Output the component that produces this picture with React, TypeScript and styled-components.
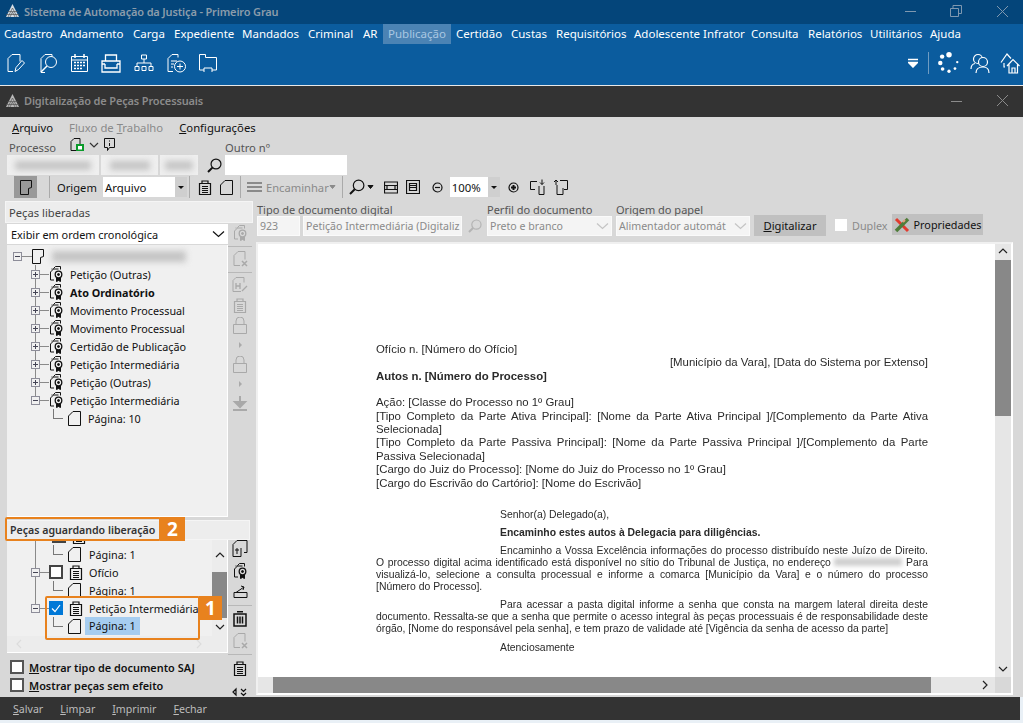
import React from "react";
import styled, { createGlobalStyle } from "styled-components";

const Global = createGlobalStyle`
  html, body { margin: 0; padding: 0; background: #fff; }
  body { font-family: "Noto Sans", "Open Sans", sans-serif; font-size: 12px; color: #111; }
  * { box-sizing: border-box; }
`;

const Page = styled.div`
  position: relative;
  width: 1023px;
  height: 723px;
  display: flex;
  flex-direction: column;
  overflow: hidden;
  background: #e9f0f6;
`;

const MainHead = styled.div`
  background: #0b5c9e;
  height: 85px;
  display: flex;
  flex-direction: column;
`;

const TitleBar = styled.div<{ $dark?: boolean }>`
  height: ${(p) => (p.$dark ? "31px" : "24px")};
  flex: none;
  display: flex;
  align-items: center;
  padding: 0 0 2px 6px;
  background: ${(p) => (p.$dark ? "#333333" : "#04457a")};
  color: ${(p) => (p.$dark ? "#8b8b8b" : "#8b9cab")};
  font-weight: 600;
  font-size: 11px;
  letter-spacing: -0.15px;
`;

const TitleText = styled.span`
  margin-left: 5px;
  flex: 1;
  white-space: nowrap;
`;

const WinButton = styled.span`
  width: 46px;
  display: flex;
  justify-content: center;
  align-items: center;
  padding-left: 4px;
`;

const MenuBar = styled.nav`
  height: 20px;
  display: flex;
  align-items: stretch;
  padding-left: 4px;
`;

const MenuItem = styled.span<{ $w: number; $active?: boolean }>`
  width: ${(p) => p.$w}px;
  flex: none;
  display: flex;
  align-items: center;
  white-space: nowrap;
  font-size: 11.5px;
  padding-bottom: 2px;
  color: #fff;
  ${(p) => p.$active && "background:#4b83b4;color:#a9c7e2;margin:0 5px 0 -5px;padding-left:5px;"}
`;

const IconBar = styled.div`
  flex: 1;
  display: flex;
  align-items: center;
  padding: 0 3px 3px 7px;
  gap: 13px;
`;

const Spacer = styled.div`
  flex: 1;
`;

const StatusIcons = styled.div`
  display: flex;
  align-items: center;
  gap: 10px;
`;

const IconDivider = styled.span`
  width: 1px;
  height: 22px;
  margin-right: -1px;
  background: #6f9cc2;
`;

const Hairline = styled.div`
  height: 1px;
  background: #e8e8e8;
  flex: none;
`;

const Body = styled.div`
  flex: 1;
  min-height: 0;
  background: #d8d8d8;
  display: flex;
  flex-direction: column;
`;

const FileMenu = styled.div`
  height: 21px;
  display: flex;
  align-items: center;
  padding-left: 12px;
  gap: 16px;
  flex: none;
`;

const FileItem = styled.span<{ $off?: boolean }>`
  color: ${(p) => (p.$off ? "#8a8a8a" : "#111")};
  font-size: 11.3px;
`;

const Under = styled.span`
  text-decoration: underline;
`;

const ProcessBlock = styled.div`
  height: 37px;
  flex: none;
  display: flex;
  padding: 1px 0 0 7px;
`;

const ProcessColumn = styled.div`
  width: 218px;
  display: flex;
  flex-direction: column;
`;

const LabelLine = styled.div<{ $flush?: boolean }>`
  height: 17px;
  display: flex;
  align-items: center;
  color: #555;
  font-size: 11.2px;
  padding-left: ${(p) => (p.$flush ? 0 : 2)}px;
`;

const ProcessIcons = styled.span`
  margin-left: 14px;
  display: flex;
  align-items: center;
  gap: 4px;
  margin-top: -5px;
`;

const InputRow = styled.div`
  display: flex;
  align-items: center;
  gap: 2px;
  height: 21px;
`;

const BlurField = styled.div<{ $w: number }>`
  width: ${(p) => p.$w}px;
  height: 20px;
  background: #efefef;
  display: flex;
  align-items: center;
  justify-content: center;
`;

const BlurInk = styled.span<{ $w: number; $h?: number }>`
  display: inline-block;
  width: ${(p) => p.$w}px;
  height: ${(p) => p.$h ?? 9}px;
  background: #c4c4c4;
  filter: blur(3px);
`;

const WhiteField = styled.div<{ $w: number }>`
  width: ${(p) => p.$w}px;
  height: 20px;
  background: #fff;
`;

const Toolbar = styled.div`
  height: 24px;
  flex: none;
  display: flex;
  align-items: center;
  padding-left: 14px;
`;

const ToggleButton = styled.span`
  width: 23px;
  height: 22px;
  background: #999;
  display: flex;
  align-items: center;
  justify-content: center;
`;

const ToolSep = styled.span<{ $l: number; $r: number }>`
  width: 1px;
  height: 22px;
  background: #aaa;
  margin: 0 ${(p) => p.$r}px 0 ${(p) => p.$l}px;
  flex: none;
`;

const ToolText = styled.span<{ $off?: boolean }>`
  font-size: 11.2px;
  white-space: nowrap;
  color: ${(p) => (p.$off ? "#8a8a8a" : "#111")};
`;

const ToolCombo = styled.span<{ $w: number; $l: number }>`
  width: ${(p) => p.$w}px;
  height: 20px;
  margin-left: ${(p) => p.$l}px;
  background: #fff;
  display: flex;
  align-items: center;
  padding-left: 2px;
  font-size: 11.4px;
  flex: none;
`;

const ComboValue = styled.span`
  flex: 1;
`;

const ComboArrow = styled.span`
  width: 12px;
  height: 100%;
  background: #cfcfcf;
  display: flex;
  align-items: center;
  justify-content: center;
  &::after {
    content: "";
    border-left: 3px solid transparent;
    border-right: 3px solid transparent;
    border-top: 3px solid #111;
  }
`;

const Gap = styled.span<{ $w: number }>`
  width: ${(p) => p.$w}px;
  flex: none;
`;

const Main = styled.div`
  flex: 1;
  min-height: 0;
  display: flex;
  padding-top: 2px;
`;

const LeftPane = styled.section`
  width: 256px;
  flex: none;
  padding-left: 5px;
  display: flex;
  flex-direction: column;
`;

const PaneHeader = styled.div`
  height: 22px;
  width: 248px;
  flex: none;
  background: #ededed;
  border: 1px solid #f5f5f5;
  display: flex;
  align-items: center;
  padding-left: 3px;
  color: #444;
  font-size: 11.2px;
`;

const UpperArea = styled.div`
  flex: 1;
  min-height: 0;
  display: flex;
  padding-left: 2px;
`;

const TreeColumn = styled.div`
  width: 221px;
  display: flex;
  flex-direction: column;
`;

const OrderCombo = styled.div`
  height: 20px;
  margin-top: 1px;
  flex: none;
  background: #fff;
  display: flex;
  align-items: center;
  justify-content: space-between;
  padding: 0 3px 0 4px;
  font-size: 10.9px;
`;

const TreePanel = styled.div`
  flex: 1;
  min-height: 0;
  margin-top: 1px;
  background: #f0f0f0;
  border-right: 1px solid #fff;
  border-bottom: 1px solid #fff;
  padding-top: 2px;
  overflow: hidden;
`;

const Row = styled.div<{ $pad: number; $trunk?: "full" | "half" }>`
  position: relative;
  height: 18px;
  display: flex;
  align-items: center;
  padding-left: ${(p) => p.$pad}px;
  font-size: 10.8px;
  white-space: nowrap;
  ${(p) =>
    p.$trunk &&
    `&::before {
      content: "";
      position: absolute;
      left: 28px;
      top: 0;
      height: ${p.$trunk === "half" ? "9px" : "18px"};
      border-left: 1px solid #8a8a8a;
    }`}
`;

const Expander = styled.span<{ $open?: boolean }>`
  position: relative;
  z-index: 1;
  width: 9px;
  height: 9px;
  flex: none;
  background: #f0f0f0;
  border: 1px solid #8d8d99;
  &::before {
    content: "";
    position: absolute;
    left: 1px;
    top: 3px;
    width: 5px;
    height: 1px;
    background: #445;
  }
  ${(p) =>
    !p.$open &&
    `&::after {
      content: "";
      position: absolute;
      left: 3px;
      top: 1px;
      width: 1px;
      height: 5px;
      background: #445;
    }`}
`;

const Dash = styled.span<{ $w: number }>`
  width: ${(p) => p.$w}px;
  height: 1px;
  background: #8a8a8a;
  flex: none;
`;

const Elbow = styled.span`
  width: 10px;
  height: 10px;
  margin-top: -9px;
  border-left: 1px solid #777;
  border-bottom: 1px solid #777;
  flex: none;
`;

const NodeLabel = styled.span<{ $bold?: boolean; $l: number; $selected?: boolean }>`
  margin-left: ${(p) => p.$l}px;
  font-weight: ${(p) => (p.$bold ? 700 : 400)};
  ${(p) => p.$selected && "background:#a6cdf0;padding:0 4px;line-height:18px;"}
`;

const SideTools = styled.aside<{ $lower?: boolean }>`
  width: 24px;
  flex: none;
  display: flex;
  flex-direction: column;
  align-items: center;
  padding: ${(p) => (p.$lower ? "0 0 2px" : "2px 0 0")};
  gap: ${(p) => (p.$lower ? 5.5 : 4.5)}px;
`;

const SideRule = styled.span`
  width: 24px;
  height: 1px;
  background: #b8b8b8;
  flex: none;
`;

const TinyArrow = styled.span`
  height: 13px;
  display: flex;
  align-items: center;
  &::after {
    content: "";
    border-top: 3px solid transparent;
    border-bottom: 3px solid transparent;
    border-left: 3px solid #aaa;
  }
`;

const LowerHeader = styled(PaneHeader)`
  width: 245px;
  height: 20px;
  margin-top: 3px;
  padding-left: 4px;
  font-weight: 600;
  color: #333;
  font-size: 10.6px;
`;

const LowerArea = styled.div`
  height: 157px;
  flex: none;
  display: flex;
  padding-left: 2px;
`;

const LowerColumn = styled.div`
  width: 221px;
  display: flex;
  flex-direction: column;
`;

const LowerTree = styled.div`
  height: 113px;
  flex: none;
  background: #f0f0f0;
  border-right: 1px solid #fff;
  border-bottom: 1px solid #fff;
  display: flex;
  flex-direction: column;
  overflow: hidden;
`;

const TreeViewport = styled.div`
  flex: 1;
  min-height: 0;
  display: flex;
  overflow: hidden;
`;

const TreeRows = styled.div`
  flex: 1;
  margin-top: -13px;
`;

const TreeScroll = styled.div`
  width: 15px;
  flex: none;
  display: flex;
  flex-direction: column;
  align-items: center;
  background: #ececec;
`;

const ScrollEnd = styled.span<{ $h?: number }>`
  height: ${(p) => p.$h ?? 16}px;
  display: flex;
  align-items: center;
  justify-content: center;
  flex: none;
`;

const ScrollThumb = styled.span<{ $len: number }>`
  width: 100%;
  height: ${(p) => p.$len}px;
  background: #888;
  flex: none;
`;

const ScrollFill = styled.span`
  flex: 1;
`;

const TreeHScroll = styled.div`
  height: 16px;
  flex: none;
  background: #ececec;
  display: flex;
  align-items: center;
  justify-content: space-between;
  padding: 0 22px 0 6px;
`;

const CheckRow = styled.div`
  display: flex;
  align-items: center;
  height: 18px;
  padding-left: 3px;
  font-size: 10.9px;
  font-weight: 600;
  gap: 5px;
  white-space: nowrap;
`;

const Options = styled.div`
  padding-top: 5px;
`;

const Check = styled.span<{ $dark?: boolean; $on?: boolean; $pale?: boolean }>`
  width: ${(p) => (p.$pale ? 12 : 14)}px;
  height: ${(p) => (p.$pale ? 12 : 14)}px;
  flex: none;
  display: inline-flex;
  align-items: center;
  justify-content: center;
  background: ${(p) => (p.$on ? "#0078d7" : "#fff")};
  border: ${(p) => (p.$pale || p.$on ? "0" : `2px solid ${p.$dark ? "#444" : "#555"}`)};
`;

const RightPane = styled.section`
  flex: 1;
  min-width: 0;
  display: flex;
  flex-direction: column;
`;

const FormRow = styled.div`
  height: 35px;
  flex: none;
  display: flex;
  align-items: flex-end;
  padding-left: 1px;
`;

const FormField = styled.div<{ $w: number; $r: number }>`
  width: ${(p) => p.$w}px;
  margin-right: ${(p) => p.$r}px;
  flex: none;
  display: flex;
  flex-direction: column;
`;

const FormLabel = styled.div`
  height: 13px;
  line-height: 13px;
  color: #555;
  font-size: 11px;
  white-space: nowrap;
`;

const FormInputs = styled.div`
  display: flex;
  align-items: center;
`;

const DimInput = styled.div<{ $w: number; $r?: number }>`
  width: ${(p) => p.$w}px;
  height: 20px;
  margin-right: ${(p) => p.$r ?? 0}px;
  background: #f4f4f4;
  border: 1px solid #fafafa;
  color: #8a8a8a;
  display: flex;
  align-items: center;
  justify-content: space-between;
  padding: 0 2px;
  font-size: 10.6px;
  white-space: nowrap;
  overflow: hidden;
`;

const DigitizeButton = styled.button`
  width: 72px;
  height: 21px;
  margin-right: 9px;
  border: 0;
  background: #c0c0c0;
  color: #111;
  font: inherit;
  font-size: 11.2px;
  padding: 0;
  flex: none;
`;

const DuplexLabel = styled.span`
  margin: 0 4px 0 5px;
  color: #8a8a8a;
  font-size: 10.8px;
`;

const PropsButton = styled.span`
  width: 91px;
  height: 21px;
  margin-bottom: 1px;
  background: #c0c0c0;
  display: flex;
  align-items: center;
  gap: 4px;
  padding-left: 2px;
  font-size: 10.8px;
  flex: none;
`;

const Viewer = styled.div`
  margin: 6px 10px 2px 0;
  flex: 1;
  min-height: 0;
  background: #fff;
  border: 2px solid #fff;
  border-top-color: #f0f0f0;
  border-left-color: #f0f0f0;
  display: grid;
  grid-template-columns: 1fr 16px;
  grid-template-rows: 1fr 16px;
`;

const Sheet = styled.article`
  overflow: hidden;
  padding: 99px 67px 0 118px;
  font-family: "Liberation Sans", Arial, sans-serif;
  font-size: 10.4px;
  color: #2a2a2a;
  filter: blur(0.25px);
`;

const DocLine = styled.div<{ $j?: boolean; $right?: boolean; $bold?: boolean; $indent?: boolean; $tight?: boolean; $after?: number }>`
  height: ${(p) => (p.$tight ? "12px" : "13.4px")};
  line-height: ${(p) => (p.$tight ? "12px" : "13.4px")};
  font-size: ${(p) => (p.$tight ? "10.4px" : "11.4px")};
  margin-bottom: ${(p) => p.$after ?? 0}px;
  white-space: ${(p) => (p.$j ? "normal" : "nowrap")};
  text-align: ${(p) => (p.$right ? "right" : p.$j ? "justify" : "left")};
  text-align-last: ${(p) => (p.$j ? "justify" : "auto")};
  font-weight: ${(p) => (p.$bold ? 700 : 400)};
  padding-left: ${(p) => (p.$indent ? "124px" : "0")};
`;

const HiddenAddress = styled.span`
  display: inline-block;
  width: 68px;
  height: 8px;
  background: #cfcfcf;
  filter: blur(2px);
`;

const VScroll = styled.div`
  background: #e6e6e6;
  display: flex;
  flex-direction: column;
`;

const HScroll = styled.div`
  background: #e6e6e6;
  display: flex;
  align-items: center;
`;

const HThumb = styled.span`
  width: 658px;
  height: 100%;
  margin-left: 15px;
  background: #888;
`;

const HEnd = styled.span`
  margin-left: auto;
  margin-right: 4px;
  display: flex;
`;

const ScrollCorner = styled.div`
  background: #d8d8d8;
`;

const BottomBar = styled.footer`
  height: 23px;
  margin: 0 3px 3px 0;
  flex: none;
  background: #333;
  display: flex;
  align-items: center;
  padding: 1px 0 0 13px;
  gap: 17px;
  color: #bdbdbd;
  font-size: 10.6px;
`;

const Callout = styled.div<{ $x: number; $y: number; $w: number; $h: number }>`
  position: absolute;
  left: ${(p) => p.$x}px;
  top: ${(p) => p.$y}px;
  width: ${(p) => p.$w}px;
  height: ${(p) => p.$h}px;
  border: 2px solid #e8821e;
  border-radius: 2px;
`;

const CalloutBadge = styled.div<{ $x: number; $y: number; $w: number; $h: number }>`
  position: absolute;
  left: ${(p) => p.$x}px;
  top: ${(p) => p.$y}px;
  width: ${(p) => p.$w}px;
  height: ${(p) => p.$h}px;
  background: #e8821e;
  color: #fff;
  font-weight: 700;
  font-size: 19px;
  display: flex;
  align-items: center;
  justify-content: center;
`;

type IconProps = { w?: number; h?: number; c?: string; sw?: number; children: React.ReactNode };

const Ico = ({ w = 16, h = 16, c = "#111", sw = 1, children }: IconProps) => (
  <svg width={w} height={h} viewBox={`0 0 ${w} ${h}`} fill="none" stroke={c} strokeWidth={sw} style={{ flex: "none" }}>
    {children}
  </svg>
);

const Logo = ({ c }: { c: string }) => (
  <svg width="13" height="14" viewBox="0 0 13 14" style={{ flex: "none" }}>
    <path d="M6.5 0 13 13H0Z" fill={c} />
    <path d="M2 13 6.5 4 11 13M4 13l2.5-5L9 13M0 10.5h13M1.5 7.5h10" stroke="#555" strokeWidth="0.7" fill="none" />
  </svg>
);

const PageIcon = ({ c = "#111" }: { c?: string }) => (
  <Ico w={13} h={15} c={c}>
    <path d="M5 .5h7.500v14H.5V5Z" />
  </Ico>
);

const DocStack = ({ c = "#111" }: { c?: string }) => (
  <Ico w={14} h={15} c={c}>
    <path d="M4 3V1h6v2M1.500 3.500h11v11h-11Z" strokeWidth="1.200" />
    <path d="M4 6.500h6M4 8.500h6M4 10.500h6M4 12.500h6" />
  </Ico>
);

const SealDoc = ({ c = "#111" }: { c?: string }) => (
  <Ico w={15} h={16} c={c}>
    <path d="M4.500 3V2.500L6.500.5h5v3M1.500 6l3-3h5M1.500 6v8h3.500M3 3.500v-1" />
    <circle cx="9.500" cy="8.500" r="3.300" strokeWidth="1.300" />
    <circle cx="9.500" cy="8.500" r="1" fill={c} />
    <path d="M7.500 12v3.500l2-1 2 1V12" fill={c} />
  </Ico>
);

const Search = ({ c = "#111", s = 15 }: { c?: string; s?: number }) => (
  <Ico w={s} h={s} c={c} sw={1.2}>
    <circle cx={s * 0.6} cy={s * 0.4} r={s * 0.33} />
    <path d={`M${s * 0.36} ${s * 0.64}L1 ${s - 1}`} strokeWidth="2" />
  </Ico>
);

const Caret = ({ c = "#111", w = 13 }: { c?: string; w?: number }) => (
  <Ico w={w} h={8} c={c} sw={1.2}>
    <path d={`M1 1.500 ${w / 2} 6.500 ${w - 1} 1.500`} />
  </Ico>
);

const Chevron = ({ d, c = "#222" }: { d: "up" | "down" | "left" | "right"; c?: string }) => {
  const paths = {
    up: "M2 7l4-4 4 4",
    down: "M2 4l4 4 4-4",
    left: "M8 2 4 6l4 4",
    right: "M4 2l4 4-4 4",
  };
  return (
    <Ico w={12} h={12} c={c} sw={1.2}>
      <path d={paths[d]} />
    </Ico>
  );
};

const Spinner = () => (
  <svg width="22" height="22" viewBox="0 0 24 24" fill="#fff" style={{ flex: "none" }}>
    <circle cx="12" cy="3" r="3" />
    <circle cx="4.500" cy="5" r="2.400" />
    <circle cx="2.500" cy="12" r="2.400" />
    <circle cx="5" cy="18.500" r="2" />
    <circle cx="12" cy="21" r="1.800" />
    <circle cx="18.500" cy="18" r="1.500" />
    <circle cx="21" cy="11" r="1.300" />
  </svg>
);

const treeItems = [
  { label: "Petição (Outras)" },
  { label: "Ato Ordinatório", bold: true },
  { label: "Movimento Processual" },
  { label: "Movimento Processual" },
  { label: "Certidão de Publicação" },
  { label: "Petição Intermediária" },
  { label: "Petição (Outras)" },
];

const menu: [string, number][] = [
  ["Cadastro", 56],
  ["Andamento", 73],
  ["Carga", 41],
  ["Expediente", 68],
  ["Mandados", 66],
  ["Criminal", 55],
  ["AR", 25],
];

const menuAfter: [string, number][] = [
  ["Certidão", 55],
  ["Custas", 45],
  ["Requisitórios", 78],
  ["Adolescente Infrator", 117],
  ["Consulta", 57],
  ["Relatórios", 62],
  ["Utilitários", 60],
  ["Ajuda", 40],
];

const DocX = () => (
  <Ico w={15} h={16} c="#a9a9a9">
    <path d="M5 .5h7v8M5 .5 1 4.500v10h6" />
    <path d="M9 10l5 5M14 10l-5 5" strokeWidth="1.500" />
  </Ico>
);

const Lock = () => (
  <Ico w={16} h={17} c="#a9a9a9">
    <path d="M1.500 7.500h13v9h-13ZM4 7.500V4a4 4 0 0 1 8 0v3.500" />
  </Ico>
);

export default function App() {
  return (
    <Page>
      <Global />
      <MainHead>
        <TitleBar>
          <Logo c="#d5dde5" />
          <TitleText>Sistema de Automação da Justiça - Primeiro Grau</TitleText>
          <WinButton>
            <Ico w={12} h={12} c="#7f98b0">
              <path d="M1 6.500h11" />
            </Ico>
          </WinButton>
          <WinButton>
            <Ico w={12} h={12} c="#7f98b0">
              <path d="M.5 3.500h8v8h-8ZM3 3V.5h8.500v8H9" />
            </Ico>
          </WinButton>
          <WinButton>
            <Ico w={13} h={13} c="#7f98b0">
              <path d="M1 1l11 11M12 1 1 12" />
            </Ico>
          </WinButton>
        </TitleBar>
        <MenuBar>
          {menu.map(([t, w]) => (
            <MenuItem key={t} $w={w}>
              {t}
            </MenuItem>
          ))}
          <MenuItem $w={68} $active>
            Publicação
          </MenuItem>
          {menuAfter.map(([t, w]) => (
            <MenuItem key={t} $w={w}>
              {t}
            </MenuItem>
          ))}
        </MenuBar>
        <IconBar>
          <Ico w={18} h={19} c="#fff">
            <path d="M5 .5h8v7M5 .5 1 4.500v13h5" />
            <path d="M8 17.500l1-4L15 6.500l2.500 2.500-6 6.500Z" />
          </Ico>
          <Ico w={20} h={19} c="#fff">
            <path d="M7 .5h7v2M7 .5 3 4.500V18.500h4" />
            <circle cx="13" cy="8" r="5.500" />
            <path d="M9 12l-6 6" strokeWidth="1.500" />
          </Ico>
          <Ico w={17} h={18} c="#fff">
            <path d="M.5 2.500h16v15H.5ZM.5 6h16" />
            <path d="M4 0v4M13 0v4" strokeWidth="1.500" />
            <path d="M3 8.500h11M3 11.500h11M3 14.500h8" strokeWidth="1.500" strokeDasharray="2 1" />
          </Ico>
          <Ico w={20} h={19} c="#fff" sw={1.3}>
            <path d="M4.500 1h11v6h-11ZM1 7h18v11H1Z" />
            <path d="M4 10v4h12v-4M1 10h3M16 10h3" />
          </Ico>
          <Ico w={20} h={18} c="#fff">
            <path d="M7.500 1h5v4h-5ZM1 12.500h4v4H1ZM8 12.500h4v4H8ZM15 12.500h4v4h-4ZM10 5v4M3 12.500V9h14v3.500" />
          </Ico>
          <Ico w={19} h={19} c="#fff">
            <path d="M5 .5h6v3M5 .5 1 4.500v13h5M4 7h6M4 10h3M4 13h2" />
            <circle cx="13" cy="12.500" r="5.500" />
            <path d="M10 12.500h6M13 9.500v6" />
          </Ico>
          <Ico w={18} h={18} c="#fff">
            <path d="M.5 16V.5h6v3h11v12.500H13M.5 16H5" />
            <path d="M5 18v-4h8v4" />
          </Ico>
          <Spacer />
          <StatusIcons>
            <Ico w={10} h={10} c="#fff" sw={1.5}>
              <path d="M0 1.500h10" />
              <path d="M.5 4.500h9L5 9Z" fill="#fff" />
            </Ico>
            <IconDivider />
            <Spinner />
            <Ico w={20} h={21} c="#fff" sw={1.2}>
              <circle cx="8" cy="6" r="4.500" />
              <path d="M1 16c0-3 1-5 4-5.500" />
              <circle cx="13" cy="9" r="4.500" fill="#0b5c9e" />
              <path d="M6 20c0-4 3-6 7-6s6 2 6 6" />
            </Ico>
            <Ico w={20} h={21} c="#fff" sw={1.2}>
              <path d="M1 9.500 7 1l4 4.500M4 10v4h1M7 13l6-6.500L19.500 13M9 11.500V20h8.500v-8.500M12 20v-5h3v5" />
            </Ico>
          </StatusIcons>
        </IconBar>
      </MainHead>
      <Hairline />
      <TitleBar $dark>
        <Logo c="#b9b9b9" />
        <TitleText>Digitalização de Peças Processuais</TitleText>
        <WinButton>
          <Ico w={12} h={12} c="#8b8b8b">
            <path d="M1 6.500h11" />
          </Ico>
        </WinButton>
        <WinButton>
          <Ico w={13} h={13} c="#8b8b8b">
            <path d="M1 1l11 11M12 1 1 12" />
          </Ico>
        </WinButton>
      </TitleBar>
      <Body>
        <FileMenu>
          <FileItem>
            <Under>A</Under>rquivo
          </FileItem>
          <FileItem $off>
            Fluxo de <Under>T</Under>rabalho
          </FileItem>
          <FileItem>
            <Under>C</Under>onfigurações
          </FileItem>
        </FileMenu>
        <ProcessBlock>
          <ProcessColumn>
            <LabelLine>
              Processo
              <ProcessIcons>
                <Ico w={14} h={13}>
                  <path d="M4 .5h6v6M4 .5 1 3.500v9h5" />
                  <rect x="7" y="7" width="6" height="5.500" fill="#fff" stroke="#0a9a2a" strokeWidth="2" />
                </Ico>
                <Chevron d="down" c="#333" />
                <Ico w={11} h={13}>
                  <path d="M.5.500h10v9h-5l-2 3v-3h-3Z" />
                  <path d="M5.500 2.500v1M5.500 5v3" />
                </Ico>
              </ProcessIcons>
            </LabelLine>
            <InputRow>
              <BlurField $w={92}>
                <BlurInk $w={76} />
              </BlurField>
              <BlurField $w={57}>
                <BlurInk $w={40} />
              </BlurField>
              <BlurField $w={38}>
                <BlurInk $w={28} />
              </BlurField>
              <Gap $w={5} />
              <Search />
            </InputRow>
          </ProcessColumn>
          <ProcessColumn>
            <LabelLine $flush>Outro nº</LabelLine>
            <InputRow>
              <WhiteField $w={122} />
            </InputRow>
          </ProcessColumn>
        </ProcessBlock>
        <Toolbar>
          <ToggleButton>
            <Ico w={12} h={15}>
              <path d="M.5.500h11v7l-3 1v6H.5Z" />
            </Ico>
          </ToggleButton>
          <ToolSep $l={12} $r={7} />
          <ToolText>Origem</ToolText>
          <ToolCombo $w={84} $l={6}>
            <ComboValue>Arquivo</ComboValue>
            <ComboArrow />
          </ToolCombo>
          <ToolSep $l={2} $r={8} />
          <DocStack />
          <Gap $w={8} />
          <PageIcon />
          <ToolSep $l={7} $r={6} />
          <Ico w={15} h={12} c="#8a8a8a" sw={2}>
            <path d="M0 2h15M0 6h15M0 10h15" />
          </Ico>
          <Gap $w={4} />
          <ToolText $off>Encaminhar</ToolText>
          <Ico w={7} h={6} c="#8a8a8a">
            <path d="M1 1.500h5L3.500 4.500Z" fill="#8a8a8a" />
          </Ico>
          <ToolSep $l={6} $r={6} />
          <Search s={16} />
          <Gap $w={2} />
          <Ico w={7} h={6}>
            <path d="M1 1.500h5L3.500 4.500Z" fill="#111" />
          </Ico>
          <Gap $w={10} />
          <Ico w={14} h={13} sw={1.2}>
            <path d="M.5 1h13v11H.5ZM.5 4.500h13M.5 8.500h13M3 4.500v4h8v-4" />
          </Ico>
          <Gap $w={8} />
          <Ico w={14} h={14} sw={1.2}>
            <path d="M.5.500h13v13H.5ZM3.500 3.500h7v7h-7ZM3.500 5.500h7M3.500 7.500h7" />
          </Ico>
          <Gap $w={12} />
          <Ico w={11} h={11} sw={1.2}>
            <circle cx="5.500" cy="5.500" r="4.500" />
            <path d="M3 5.500h5" />
          </Ico>
          <ToolCombo $w={50} $l={7}>
            <ComboValue>100%</ComboValue>
            <ComboArrow />
          </ToolCombo>
          <Gap $w={8} />
          <Ico w={11} h={11} sw={1.2}>
            <circle cx="5.500" cy="5.500" r="4.500" />
            <path d="M3 5.500h5M5.500 3v5" strokeWidth="2" />
          </Ico>
          <Gap $w={10} />
          <Ico w={17} h={17}>
            <path d="M8 2.500H1.500v8H6M10 7v8.500h5V7" />
            <path d="M13 .500v5M11 3.500l2 2 2-2" />
          </Ico>
          <Gap $w={6} />
          <Ico w={17} h={17}>
            <path d="M8 1.500h7.500v9H12M5 6v9.500h6V9" />
            <path d="M4 1v5M2 3l2-2 2 2" />
          </Ico>
        </Toolbar>
        <Main>
          <LeftPane>
            <PaneHeader>Peças liberadas</PaneHeader>
            <UpperArea>
              <TreeColumn>
                <OrderCombo>
                  Exibir em ordem cronológica
                  <Caret />
                </OrderCombo>
                <TreePanel>
                  <Row $pad={6}>
                    <Expander $open />
                    <Dash $w={10} />
                    <Ico w={12} h={15}>
                      <path d="M.5.500h11v7l-3 1v6H.5Z" />
                    </Ico>
                    <Gap $w={8} />
                    <BlurInk $w={134} $h={11} />
                  </Row>
                  {treeItems.map((it, i) => (
                    <Row key={i} $pad={24} $trunk="full">
                      <Expander />
                      <Dash $w={9} />
                      <SealDoc />
                      <NodeLabel $l={6} $bold={it.bold}>
                        {it.label}
                      </NodeLabel>
                    </Row>
                  ))}
                  <Row $pad={24} $trunk="half">
                    <Expander $open />
                    <Dash $w={9} />
                    <SealDoc />
                    <NodeLabel $l={6}>Petição Intermediária</NodeLabel>
                  </Row>
                  <Row $pad={46}>
                    <Elbow />
                    <Gap $w={5} />
                    <PageIcon />
                    <NodeLabel $l={7}>Página: 10</NodeLabel>
                  </Row>
                </TreePanel>
              </TreeColumn>
              <SideTools>
                <SealDoc c="#a9a9a9" />
                <SideRule />
                <DocX />
                <SideRule />
                <Ico w={16} h={16} c="#a9a9a9">
                  <path d="M4 .5h8v5M4 .5 1 3.500v11h8" />
                  <path d="M4 6v6M8 6v6M4 9h4M10 14l5-5" strokeWidth="1.300" />
                </Ico>
                <DocStack c="#a9a9a9" />
                <Lock />
                <TinyArrow />
                <Lock />
                <TinyArrow />
                <Ico w={16} h={16} c="#a9a9a9" sw={2}>
                  <path d="M8 1v7M3 7h10L8 12ZM1 15h14" fill="#a9a9a9" />
                </Ico>
              </SideTools>
            </UpperArea>
            <LowerHeader>Peças aguardando liberação</LowerHeader>
            <LowerArea>
              <LowerColumn>
                <LowerTree>
                  <TreeViewport>
                    <TreeRows>
                      <Row $pad={45} $trunk="full">
                        <Check $dark />
                        <Gap $w={6} />
                        <DocStack />
                      </Row>
                      <Row $pad={46} $trunk="full">
                        <Elbow />
                        <Gap $w={5} />
                        <PageIcon />
                        <NodeLabel $l={8}>Página: 1</NodeLabel>
                      </Row>
                      <Row $pad={24} $trunk="full">
                        <Expander $open />
                        <Dash $w={9} />
                        <Check $dark />
                        <Gap $w={6} />
                        <DocStack />
                        <NodeLabel $l={6}>Ofício</NodeLabel>
                      </Row>
                      <Row $pad={46} $trunk="full">
                        <Elbow />
                        <Gap $w={5} />
                        <PageIcon />
                        <NodeLabel $l={8}>Página: 1</NodeLabel>
                      </Row>
                      <Row $pad={24} $trunk="half">
                        <Expander $open />
                        <Dash $w={9} />
                        <Check $on>
                          <Ico w={10} h={10} c="#fff" sw={1.2}>
                            <path d="M1 5.500 4 8.500 9 2" />
                          </Ico>
                        </Check>
                        <Gap $w={6} />
                        <DocStack />
                        <NodeLabel $l={6}>Petição Intermediária</NodeLabel>
                      </Row>
                      <Row $pad={46}>
                        <Elbow />
                        <Gap $w={5} />
                        <PageIcon />
                        <NodeLabel $l={4} $selected>
                          Página: 1
                        </NodeLabel>
                      </Row>
                    </TreeRows>
                    <TreeScroll>
                      <ScrollEnd $h={32}>
                        <Chevron d="up" />
                      </ScrollEnd>
                      <ScrollThumb $len={46} />
                      <ScrollFill />
                      <ScrollEnd $h={18}>
                        <Chevron d="down" />
                      </ScrollEnd>
                    </TreeScroll>
                  </TreeViewport>
                  <TreeHScroll>
                    <Chevron d="left" c="#dcdcdc" />
                    <Chevron d="right" c="#dcdcdc" />
                  </TreeHScroll>
                </LowerTree>
                <Options>
                  <CheckRow>
                    <Check />
                    <span>
                      <Under>M</Under>ostrar tipo de documento SAJ
                    </span>
                  </CheckRow>
                  <CheckRow>
                    <Check />
                    <span>
                      <Under>M</Under>ostrar peças sem efeito
                    </span>
                  </CheckRow>
                </Options>
              </LowerColumn>
              <SideTools $lower>
                <Ico w={16} h={17}>
                  <path d="M5 .5h10v12h-3M5 .5 1 4.500v12h8V8M3 10h4M5 8v6" />
                </Ico>
                <SealDoc />
                <Ico w={15} h={15}>
                  <path d="M1 13.500h13v-5H1ZM3 8.500 11 3M8 2l3 1-1 3" />
                </Ico>
                <SideRule />
                <Ico w={14} h={16} sw={1.5}>
                  <path d="M1 3h12v12H1ZM4 .8h6M4.500 5.500v7M7 5.500v7M9.500 5.500v7" />
                </Ico>
                <DocX />
                <SideRule />
                <DocStack />
                <Spacer />
                <Ico w={16} h={10} sw={1.2}>
                  <path d="M4 2v6L1 5ZM9 2l2.500 2.500L14 2M9 6l2.500 2.500L14 6" />
                </Ico>
              </SideTools>
            </LowerArea>
          </LeftPane>
          <RightPane>
            <FormRow>
              <FormField $w={226} $r={4}>
                <FormLabel>Tipo de documento digital</FormLabel>
                <FormInputs>
                  <DimInput $w={43} $r={3}>
                    923
                  </DimInput>
                  <DimInput $w={159} $r={6}>
                    Petição Intermediária (Digitaliz
                  </DimInput>
                  <Search c="#b4b4b4" s={14} />
                </FormInputs>
              </FormField>
              <FormField $w={125} $r={4}>
                <FormLabel>Perfil do documento</FormLabel>
                <DimInput $w={125}>
                  Preto e branco
                  <Caret c="#c4c4c4" />
                </DimInput>
              </FormField>
              <FormField $w={134} $r={4}>
                <FormLabel>Origem do papel</FormLabel>
                <DimInput $w={134}>
                  Alimentador automát
                  <Caret c="#c4c4c4" />
                </DimInput>
              </FormField>
              <DigitizeButton>
                <Under>D</Under>igitalizar
              </DigitizeButton>
              <FormInputs>
                <Check $pale />
                <DuplexLabel>Duplex</DuplexLabel>
                <PropsButton>
                  <svg width="16" height="16" viewBox="0 0 16 16" style={{ flex: "none" }}>
                    <path d="M2 2l12 12" stroke="#e23b2e" strokeWidth="3" />
                    <path d="M14 2 2 14" stroke="#4f7d3a" strokeWidth="3.5" />
                    <path d="M11 3 9 5" stroke="#e2a07a" strokeWidth="2" />
                  </svg>
                  Propriedades
                </PropsButton>
              </FormInputs>
            </FormRow>
            <Viewer>
              <Sheet>
                <DocLine>Ofício n. [Número do Ofício]</DocLine>
                <DocLine $right>[Município da Vara], [Data do Sistema por Extenso]</DocLine>
                <DocLine $bold $after={13}>
                  Autos n. [Número do Processo]
                </DocLine>
                <DocLine>Ação: [Classe do Processo no 1º Grau]</DocLine>
                <DocLine $j>[Tipo Completo da Parte Ativa Principal]: [Nome da Parte Ativa Principal ]/[Complemento da Parte Ativa</DocLine>
                <DocLine>Selecionada]</DocLine>
                <DocLine $j>[Tipo Completo da Parte Passiva Principal]: [Nome da Parte Passiva Principal ]/[Complemento da Parte</DocLine>
                <DocLine>Passiva Selecionada]</DocLine>
                <DocLine>[Cargo do Juiz do Processo]: [Nome do Juiz do Processo no 1º Grau]</DocLine>
                <DocLine $after={19}>[Cargo do Escrivão do Cartório]: [Nome do Escrivão]</DocLine>
                <DocLine $tight $indent $after={6}>
                  Senhor(a) Delegado(a),
                </DocLine>
                <DocLine $tight $indent $bold $after={6}>
                  Encaminho estes autos à Delegacia para diligências.
                </DocLine>
                <DocLine $tight $indent $j>
                  Encaminho a Vossa Excelência informações do processo distribuído neste Juízo de Direito.
                </DocLine>
                <DocLine $tight $j>
                  O processo digital acima identificado está disponível no sítio do Tribunal de Justiça, no endereço <HiddenAddress /> Para
                </DocLine>
                <DocLine $tight $j>
                  visualizá-lo, selecione a consulta processual e informe a comarca [Município da Vara] e o número do processo
                </DocLine>
                <DocLine $tight $after={6}>
                  [Número do Processo].
                </DocLine>
                <DocLine $tight $indent $j>
                  Para acessar a pasta digital informe a senha que consta na margem lateral direita deste
                </DocLine>
                <DocLine $tight $j>
                  documento. Ressalta-se que a senha que permite o acesso integral às peças processuais é de responsabilidade deste
                </DocLine>
                <DocLine $tight $after={7}>
                  órgão, [Nome do responsável pela senha], e tem prazo de validade até [Vigência da senha de acesso da parte]
                </DocLine>
                <DocLine $tight $indent>
                  Atenciosamente
                </DocLine>
              </Sheet>
              <VScroll>
                <ScrollEnd>
                  <Chevron d="up" />
                </ScrollEnd>
                <ScrollThumb $len={156} />
                <ScrollFill />
                <ScrollEnd>
                  <Chevron d="down" />
                </ScrollEnd>
              </VScroll>
              <HScroll>
                <HThumb />
                <HEnd>
                  <Chevron d="right" />
                </HEnd>
              </HScroll>
              <ScrollCorner />
            </Viewer>
          </RightPane>
        </Main>
      </Body>
      <BottomBar>
        <span>
          <Under>S</Under>alvar
        </span>
        <span>
          <Under>L</Under>impar
        </span>
        <span>
          <Under>I</Under>mprimir
        </span>
        <span>
          <Under>F</Under>echar
        </span>
      </BottomBar>
      <Callout $x={5} $y={517} $w={156} $h={24} />
      <CalloutBadge $x={160} $y={517} $w={25} $h={24}>
        2
      </CalloutBadge>
      <Callout $x={45} $y={596} $w={155} $h={44} />
      <CalloutBadge $x={199} $y={596} $w={23} $h={24}>
        1
      </CalloutBadge>
    </Page>
  );
}
